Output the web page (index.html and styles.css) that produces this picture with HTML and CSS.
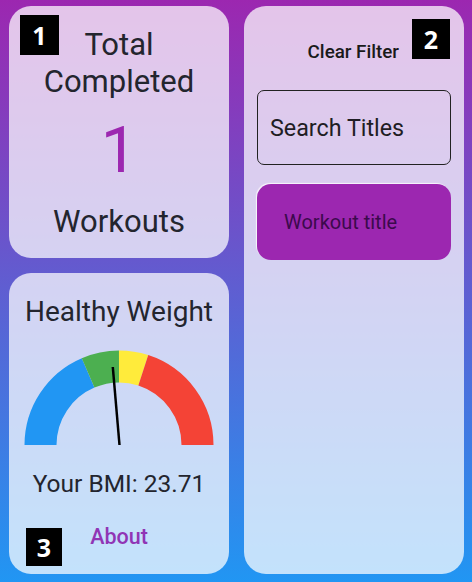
FILE: index.html
```html
<!DOCTYPE html>
<html>
<head>
<meta charset="utf-8">
<link rel="stylesheet" href="styles.css">
</head>
<body>
<div class="screen">
  <div class="col-left">
    <div class="card card-total">
      <div class="big-label">Total<br>Completed</div>
      <div class="count">1</div>
      <div class="big-label workouts">Workouts</div>
      <span class="badge badge-1">1</span>
    </div>
    <div class="card card-bmi">
      <div class="bmi-title">Healthy Weight</div>
      <svg class="gauge" width="190" height="96" viewBox="0 0 190 96">
        <path d="M16.5 95 A78.5 78.5 0 0 1 64.1 22.9" stroke="#2196f3" stroke-width="32" fill="none"/>
        <path d="M64.1 22.9 A78.5 78.5 0 0 1 95 16.5" stroke="#4caf50" stroke-width="32" fill="none"/>
        <path d="M95 16.5 A78.5 78.5 0 0 1 119.3 20.3" stroke="#ffeb3b" stroke-width="32" fill="none"/>
        <path d="M119.3 20.3 A78.5 78.5 0 0 1 173.5 95" stroke="#f44336" stroke-width="32" fill="none"/>
        <line x1="95.5" y1="95" x2="88.8" y2="17" stroke="#000" stroke-width="2.5"/>
      </svg>
      <div class="bmi-value">Your BMI: 23.71</div>
      <div class="about">About</div>
      <span class="badge badge-3">3</span>
    </div>
  </div>
  <div class="card card-list">
    <div class="filter-row"><span class="clear-filter">Clear Filter</span></div>
    <div class="search-box">Search Titles</div>
    <div class="workout-item">Workout title</div>
    <span class="badge badge-2">2</span>
  </div>
</div>
</body>
</html>
```
FILE: styles.css
```css
html, body {
  margin: 0;
  padding: 0;
}
body {
  width: 472px;
  height: 582px;
  overflow: hidden;
  background: linear-gradient(to bottom, #9c27b0 0%, #2196f3 100%);
  font-family: Roboto, "Noto Sans", sans-serif;
  color: #23252e;
}
.screen {
  display: grid;
  grid-template-columns: 220px 220px;
  column-gap: 15px;
  padding: 6px 8px 8px 9px;
  height: 582px;
  box-sizing: border-box;
}
.col-left {
  display: grid;
  grid-template-rows: 252px 301px;
  row-gap: 15px;
}
.card {
  position: relative;
  background: rgba(255, 255, 255, 0.73);
  border-radius: 22px;
  box-sizing: border-box;
}
.card-total {
  display: flex;
  flex-direction: column;
  align-items: center;
  padding-top: 20px;
  text-align: center;
}
.big-label {
  font-size: 31px;
  line-height: 37px;
}
.count {
  font-size: 65px;
  line-height: 76px;
  color: #9c27b0;
  margin-top: 12px;
}
.workouts {
  margin-top: 15px;
}
.card-bmi {
  display: flex;
  flex-direction: column;
  align-items: center;
  padding-top: 23px;
}
.bmi-title {
  font-size: 28px;
  line-height: 32px;
}
.gauge {
  display: block;
  margin-top: 22px;
}
.bmi-value {
  font-size: 24.5px;
  line-height: 30px;
  margin-top: 23px;
}
.about {
  font-size: 21.5px;
  line-height: 24px;
  font-weight: 500;
  color: #9035b5;
  margin-top: 26px;
}
.card-list {
  padding: 36px 13px 0 13px;
  display: flex;
  flex-direction: column;
}
.filter-row {
  display: flex;
  justify-content: flex-end;
  padding-right: 52px;
}
.clear-filter {
  font-size: 18.8px;
  line-height: 21px;
  font-weight: 500;
  color: #1a1a1a;
}
.search-box {
  margin-top: 27px;
  height: 75px;
  border: 1.5px solid #222;
  border-radius: 7px;
  box-sizing: border-box;
  display: flex;
  align-items: center;
  padding-left: 12px;
  font-size: 23.3px;
  color: #1f1d24;
}
.workout-item {
  margin-top: 19px;
  height: 76px;
  border-radius: 14px;
  background: #9c27b0;
  box-shadow: -1px -1px 1px rgba(255, 255, 255, 0.8);
  display: flex;
  align-items: center;
  padding-left: 27px;
  font-size: 20px;
  color: #3b0a4c;
}
.badge {
  position: absolute;
  background: #000;
  color: #fff;
  font-family: "Open Sans", "DejaVu Sans", sans-serif;
  font-weight: 700;
  font-size: 25px;
  display: flex;
  align-items: center;
  justify-content: center;
}
.badge-1 {
  left: 11px;
  top: 9px;
  width: 39px;
  height: 40px;
}
.badge-2 {
  left: 168px;
  top: 13px;
  width: 38px;
  height: 40px;
}
.badge-3 {
  left: 17px;
  top: 255px;
  width: 36px;
  height: 38px;
}
```
